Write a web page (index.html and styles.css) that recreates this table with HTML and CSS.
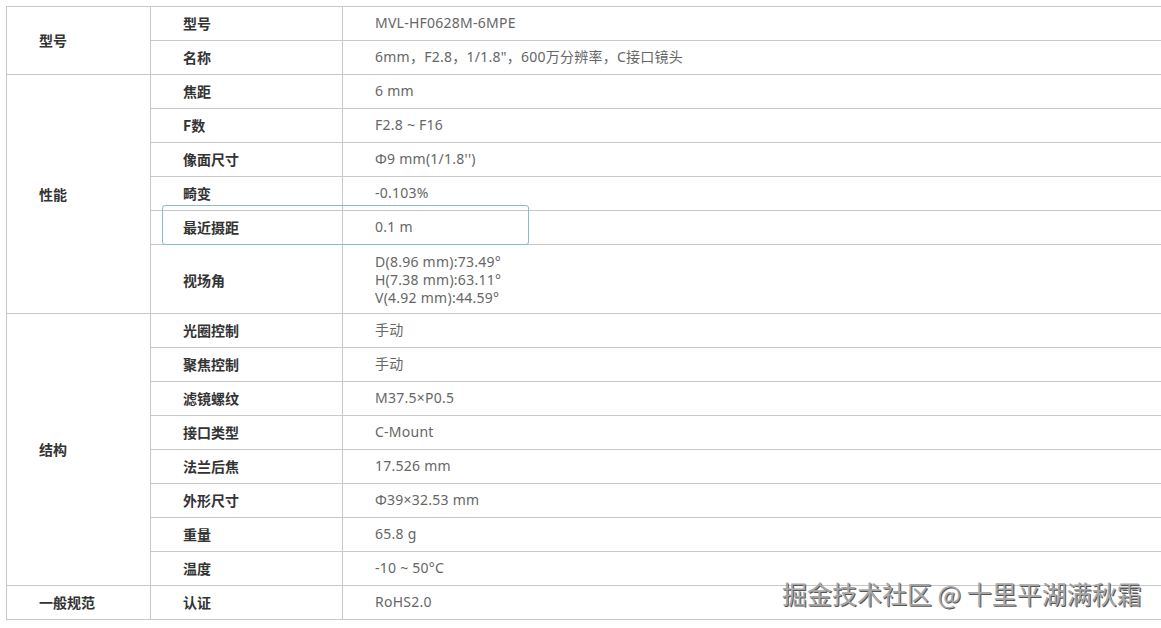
FILE: index.html
```html
<!DOCTYPE html>
<html lang="zh">
<head>
<meta charset="utf-8">
<link rel="stylesheet" href="styles.css">
</head>
<body>
<div class="wrap">
<table class="spec">
<colgroup><col class="c1"><col class="c2"><col class="c3"></colgroup>
<tbody>
<tr><td class="grp" rowspan="2">型号</td><td class="lbl">型号</td><td class="val">MVL-HF0628M-6MPE</td></tr>
<tr><td class="lbl">名称</td><td class="val">6mm，F2.8，1/1.8"，600万分辨率，C接口镜头</td></tr>
<tr><td class="grp" rowspan="6">性能</td><td class="lbl">焦距</td><td class="val">6 mm</td></tr>
<tr><td class="lbl">F数</td><td class="val">F2.8 ~ F16</td></tr>
<tr><td class="lbl">像面尺寸</td><td class="val">Φ9 mm(1/1.8'')</td></tr>
<tr><td class="lbl">畸变</td><td class="val">-0.103%</td></tr>
<tr><td class="lbl">最近摄距</td><td class="val">0.1 m</td></tr>
<tr class="tall"><td class="lbl">视场角</td><td class="val"><div class="line">D(8.96 mm):73.49°</div><div class="line">H(7.38 mm):63.11°</div><div class="line">V(4.92 mm):44.59°</div></td></tr>
<tr><td class="grp" rowspan="8">结构</td><td class="lbl">光圈控制</td><td class="val">手动</td></tr>
<tr><td class="lbl">聚焦控制</td><td class="val">手动</td></tr>
<tr><td class="lbl">滤镜螺纹</td><td class="val">M37.5×P0.5</td></tr>
<tr><td class="lbl">接口类型</td><td class="val">C-Mount</td></tr>
<tr><td class="lbl">法兰后焦</td><td class="val">17.526 mm</td></tr>
<tr><td class="lbl">外形尺寸</td><td class="val">Φ39×32.53 mm</td></tr>
<tr><td class="lbl">重量</td><td class="val">65.8 g</td></tr>
<tr><td class="lbl">温度</td><td class="val">-10 ~ 50°C</td></tr>
<tr><td class="grp">一般规范</td><td class="lbl">认证</td><td class="val">RoHS2.0</td></tr>
</tbody>
</table>
<div class="focus"></div>
<div class="watermark">掘金技术社区 @ 十里平湖满秋霜</div>
</div>
</body>
</html>
```

FILE: styles.css
```css
html, body {
  margin: 0;
  padding: 0;
  background: #fff;
  overflow: hidden;
}
body {
  font-family: "Noto Sans", "Noto Sans CJK SC", sans-serif;
  width: 1161px;
  height: 628px;
}
.wrap {
  position: relative;
  padding: 6px 0 0 6px;
}
.spec {
  border-collapse: collapse;
  width: 1180px;
  table-layout: fixed;
}
.c1 { width: 144px; }
.c2 { width: 192px; }
.spec td {
  border: 1px solid #c8c8c8;
  padding: 7px 32px 8px 32px;
  height: 18px;
  font-size: 14px;
  line-height: 18px;
  vertical-align: middle;
  white-space: nowrap;
}
.spec .tall td {
  padding-top: 8px;
  padding-bottom: 6px;
}
.grp, .lbl {
  font-family: "Noto Sans CJK SC", sans-serif;
  font-weight: bold;
  color: #333;
}
.val {
  color: #666;
  letter-spacing: 0.25px;
}
.line {
  height: 18px;
}
.focus {
  position: absolute;
  left: 162px;
  top: 205px;
  width: 365px;
  height: 38px;
  border: 1px solid #86b8e0;
  border-radius: 3px;
}
.watermark {
  position: absolute;
  left: 782px;
  top: 577px;
  font-family: "Noto Sans CJK SC", sans-serif;
  font-size: 25px;
  line-height: 32px;
  color: #a8a8a8;
  text-shadow: 1px 1px 0 #555;
  white-space: nowrap;
}
```
